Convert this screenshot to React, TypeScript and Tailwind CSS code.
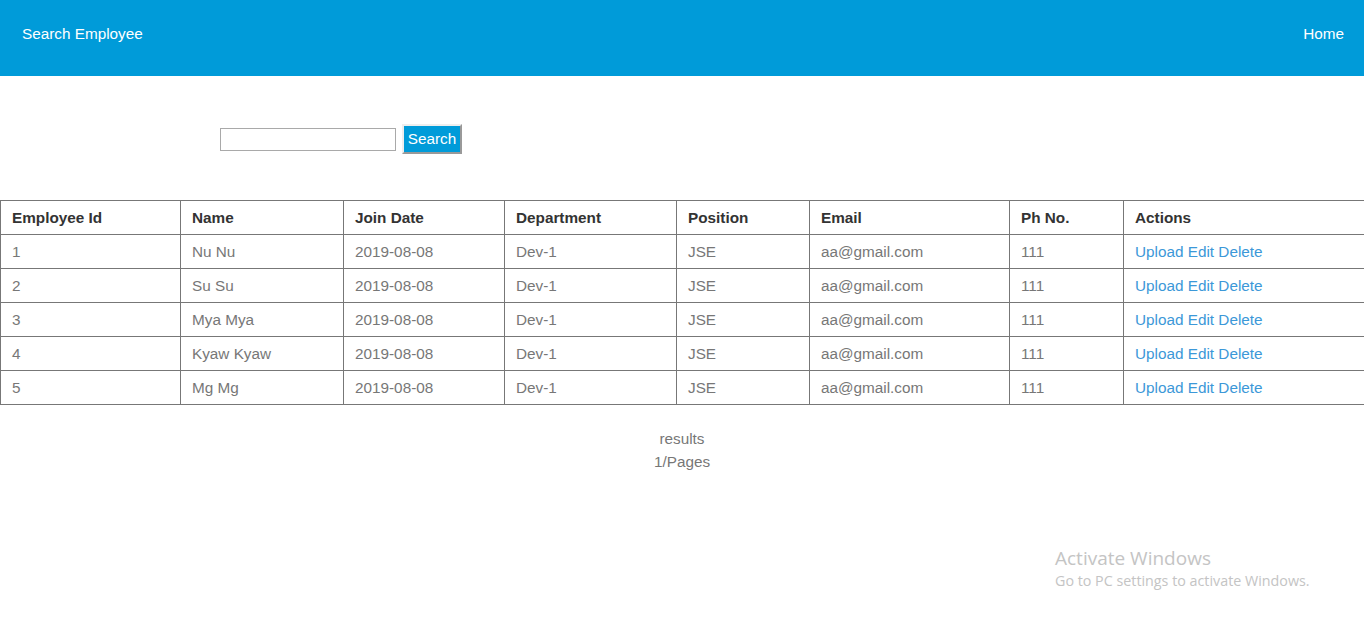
import React from "react";

const rows = [
  { id: 1, name: "Nu Nu" },
  { id: 2, name: "Su Su" },
  { id: 3, name: "Mya Mya" },
  { id: 4, name: "Kyaw Kyaw" },
  { id: 5, name: "Mg Mg" },
];

const cols = [
  { label: "Employee Id", w: "w-[180px]" },
  { label: "Name", w: "w-[163px]" },
  { label: "Join Date", w: "w-[161px]" },
  { label: "Department", w: "w-[172px]" },
  { label: "Position", w: "w-[133px]" },
  { label: "Email", w: "w-[200px]" },
  { label: "Ph No.", w: "w-[114px]" },
  { label: "Actions", w: "" },
];

const cell = "border border-[#777] px-[11px] pt-[2px]";

export default function App() {
  return (
    <div className="relative min-h-[623px] overflow-hidden bg-white font-['Liberation_Sans',Arial,sans-serif] text-[15.3px]">
      {/* Top bar */}
      <div className="flex h-[76px] items-start justify-between bg-[#009bd9] px-[22px] pt-[25px] leading-[18px] text-white">
        <span>Search Employee</span>
        <span className="mr-[-2px]">Home</span>
      </div>

      {/* Search */}
      <div className="flex items-center pl-[220px] pt-[48px]">
        <input
          type="text"
          className="h-[23px] w-[176px] border border-[#a9a9a9] bg-white outline-none"
        />
        <button className="ml-[6px] h-[30px] w-[60px] border-2 border-t-[#eee] border-l-[#eee] border-r-[#999] border-b-[#999] bg-[#009bd9] leading-[18px] text-white">
          Search
        </button>
      </div>

      {/* Table, runs past the right edge */}
      <div className="mt-[46px] w-full overflow-hidden">
        <table className="w-[1368px] border-collapse border border-[#333]">
          <thead>
            <tr className="h-[34px]">
              {cols.map((c) => (
                <th key={c.label} className={`${c.w} ${cell} text-left font-bold text-[#333]`}>
                  {c.label}
                </th>
              ))}
            </tr>
          </thead>
          <tbody className="text-[#777]">
            {rows.map((r) => (
              <tr key={r.id} className="h-[34px]">
                <td className={cell}>{r.id}</td>
                <td className={cell}>{r.name}</td>
                <td className={cell}>2019-08-08</td>
                <td className={cell}>Dev-1</td>
                <td className={cell}>JSE</td>
                <td className={cell}>aa@gmail.com</td>
                <td className={cell}>111</td>
                <td className={`${cell} text-[#3c98d8]`}>
                  <a>Upload</a> <a>Edit</a> <a>Delete</a>
                </td>
              </tr>
            ))}
          </tbody>
        </table>
      </div>

      {/* Pagination */}
      <div className="mt-[22px] flex flex-col items-center leading-[23px] text-[#777]">
        <span>results</span>
        <span>1/Pages</span>
      </div>

      {/* Windows watermark */}
      <div className="absolute left-[1055px] top-[546px] font-['Open_Sans',sans-serif] text-[#c4c4c4]">
        <div className="text-[19px] leading-[24px]">Activate Windows</div>
        <div className="text-[14.3px] leading-[21px]">Go to PC settings to activate Windows.</div>
      </div>
    </div>
  );
}
